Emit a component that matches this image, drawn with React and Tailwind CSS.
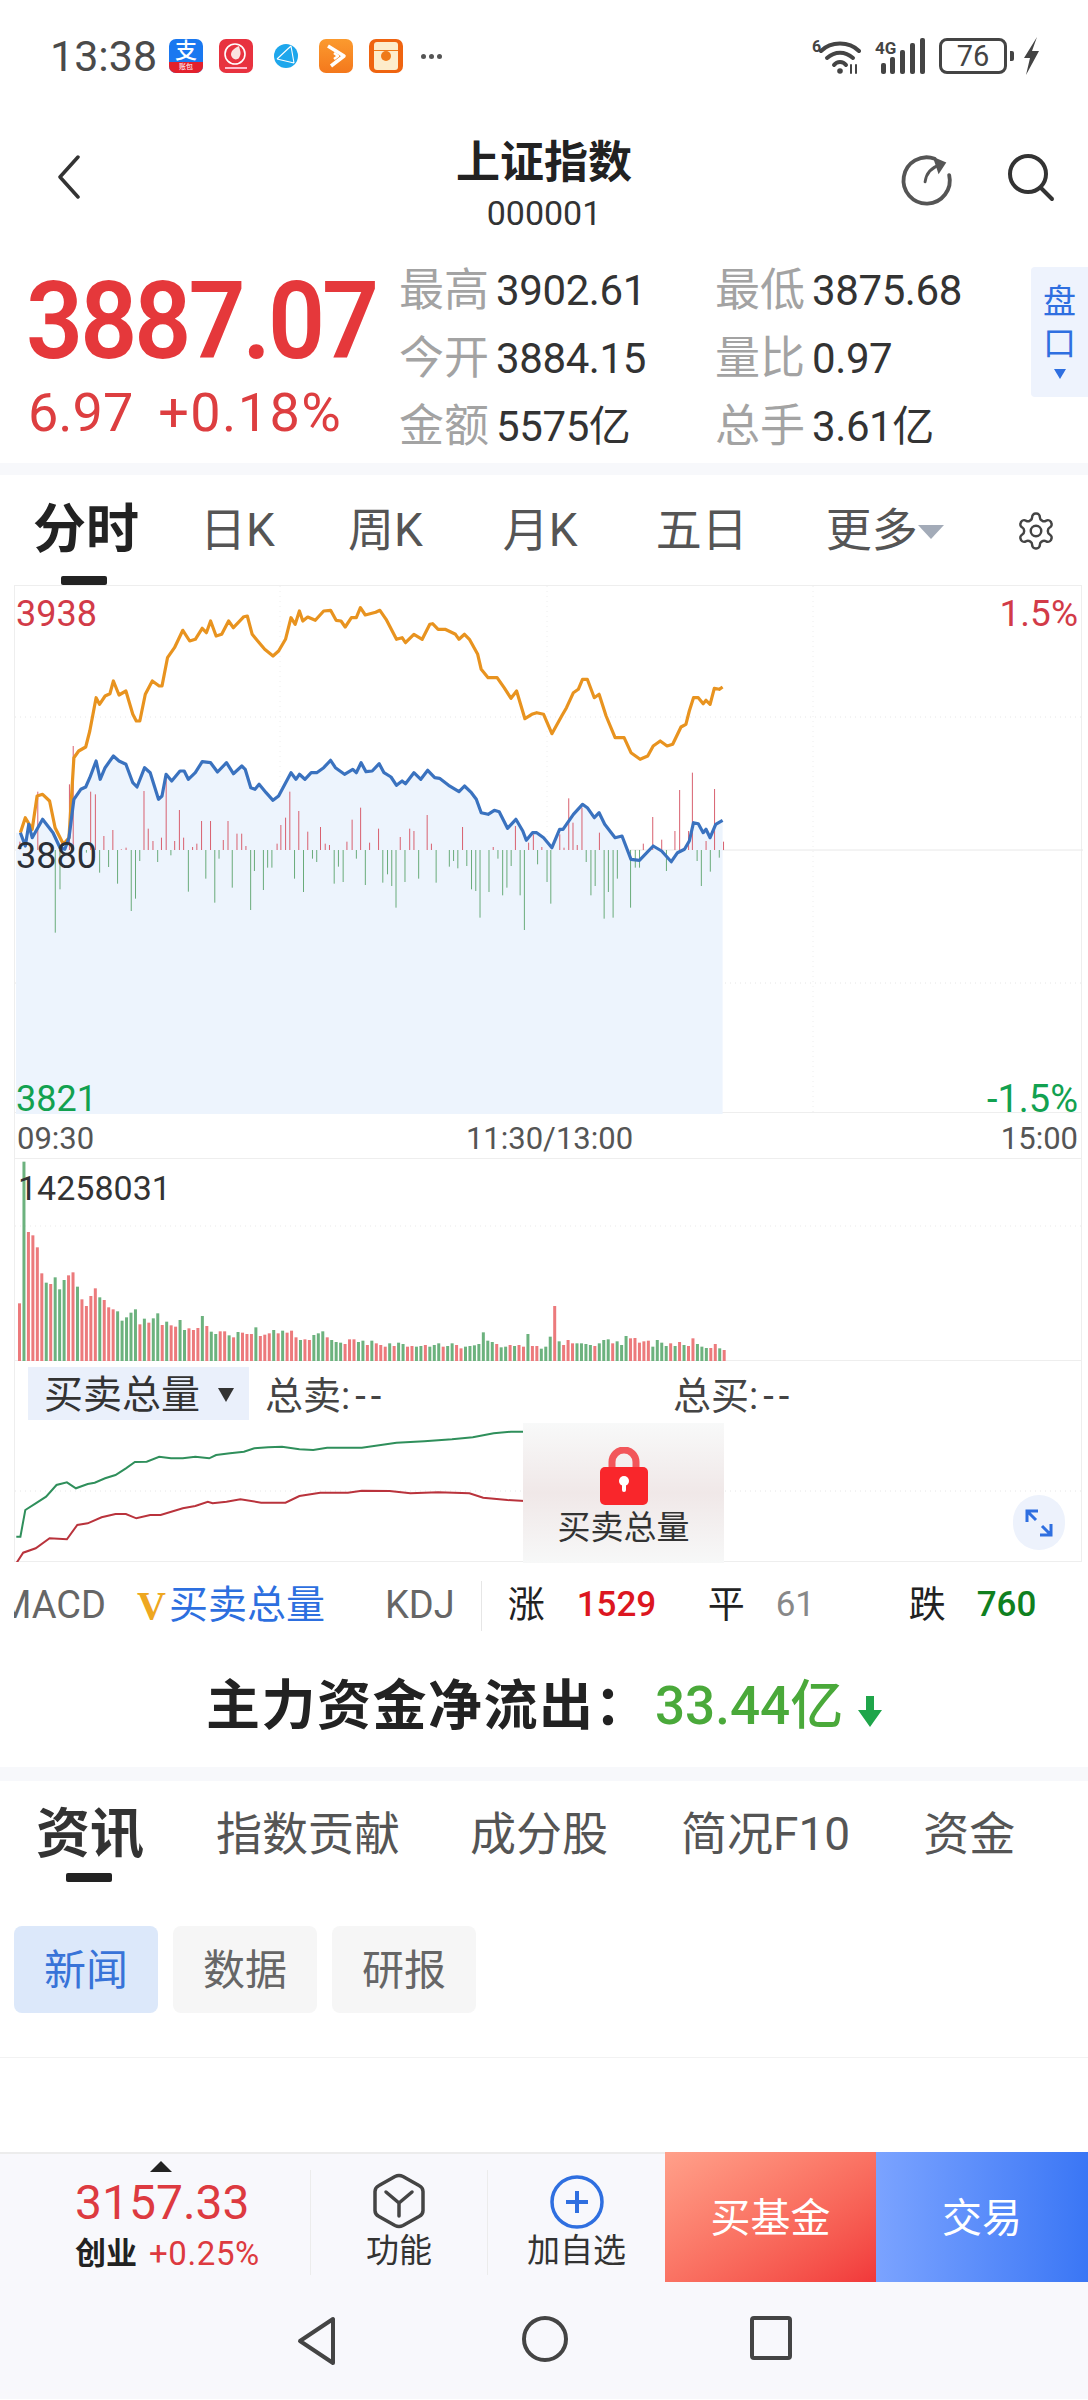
import React from "react";

const orange = "28,1085 35,1040 45,1075 52,975 60,970 70,990 78,1070 90,1120 98,1100 105,860 112,840 122,828 128,780 137,680 142,700 150,675 157,668 162,630 170,672 180,660 190,730 195,750 200,750 208,670 218,630 228,645 232,645 240,560 250,530 262,478 272,510 280,505 290,472 296,485 302,450 310,495 318,490 328,450 335,470 350,437 355,435 362,490 370,510 380,535 392,555 400,540 410,505 418,440 424,460 430,420 435,450 442,438 453,448 465,420 475,418 483,448 490,450 496,468 505,440 512,440 518,410 525,432 540,424 546,418 555,445 570,505 578,500 583,515 595,490 607,505 618,460 622,458 630,475 640,475 655,490 660,505 668,490 675,505 687,550 692,595 702,620 715,620 725,650 735,682 743,660 755,743 765,730 772,725 782,730 794,788 808,735 815,710 825,665 832,655 838,625 845,625 855,680 862,670 872,735 885,800 898,800 908,845 921,865 932,855 940,825 950,810 960,825 968,820 980,768 987,760 992,720 998,680 1005,680 1012,698 1016,688 1022,700 1028,652 1035,655 1040,648";
const blue = "28,1085 35,1125 40,1060 45,1100 60,1045 75,1085 85,1130 92,1135 98,1100 105,985 115,955 122,948 128,920 137,870 143,925 150,890 162,855 170,870 180,880 190,935 196,948 207,890 215,905 227,985 232,975 238,910 246,930 258,900 264,900 270,925 280,905 290,872 302,875 312,903 325,875 335,908 347,885 352,895 360,950 366,955 372,940 382,965 392,988 400,975 418,905 425,925 430,910 438,925 447,905 455,905 465,890 475,868 482,890 495,910 507,895 512,905 519,875 526,902 535,900 545,878 552,905 562,918 570,943 578,930 583,938 595,905 605,925 615,898 625,920 632,922 645,943 660,962 668,945 678,965 685,985 692,1025 702,1030 711,1018 718,1022 730,1072 742,1045 752,1080 757,1108 766,1085 772,1085 782,1100 794,1130 805,1075 810,1075 825,1030 838,1000 845,1010 855,1040 862,1025 870,1060 885,1100 895,1095 908,1165 920,1168 940,1125 952,1140 966,1172 975,1145 985,1135 992,1110 998,1055 1005,1058 1012,1085 1016,1075 1022,1100 1030,1060 1040,1048";
const KX = 1088 / 1568;
const mainPts = (s) => s.split(" ").map((p) => { const [x, y] = p.split(",").map(Number); return [x * KX - 14, y / 3 + 470 - 585]; });
const fmt = (a) => a.map(([x, y]) => `${x.toFixed(1)},${y.toFixed(1)}`).join(" ");
const bluePts = mainPts(blue);
const fillPts = [...bluePts, [bluePts[bluePts.length - 1][0], 528], [1, 528], [1, bluePts[0][1]]];

const redTicks = [[40,362],[78,212],[145,190],[153,75],[190,212],[200,220],[218,345],[237,327],[255,385],[265,380],[303,210],[312,323],[322,360],[340,350],[350,160],[368,360],[378,267],[387,350],[406,378],[415,368],[425,300],[444,300],[471,357],[481,300],[500,338],[510,338],[519,375],[585,368],[593,312],[603,290],[612,212],[631,270],[650,332],[677,318],[687,368],[696,372],[733,362],[744,296],[762,260],[781,365],[800,323],[846,348],[866,323],[875,330],[903,282],[912,368],[978,318],[1043,378],[1090,315],[1118,365],[1128,340],[1146,378],[1184,340],[1193,380],[1203,232],[1212,305],[1221,372],[1231,260],[1268,335],[1361,368],[1381,288],[1400,356],[1428,330],[1438,207],[1457,330],[1465,155],[1494,360],[1512,204],[1531,362]];
const greenTicks = [[115,635],[125,505],[181,395],[209,455],[228,438],[247,488],[276,570],[285,533],[294,420],[332,423],[360,403],[397,512],[434,473],[453,545],[462,413],[490,500],[529,567],[537,450],[556,507],[565,440],[574,440],[622,473],[641,513],[660,413],[669,423],[706,488],[715,437],[725,483],[753,413],[772,492],[809,485],[819,460],[828,495],[837,560],[856,483],[885,473],[922,485],[950,437],[959,420],[968,442],[987,435],[997,505],[1006,510],[1015,590],[1034,513],[1053,413],[1063,523],[1072,500],[1081,435],[1100,523],[1109,627],[1137,430],[1157,483],[1165,548],[1240,423],[1250,523],[1259,495],[1278,593],[1287,513],[1297,590],[1306,473],[1334,560],[1344,440],[1353,440],[1410,450],[1475,420],[1484,495],[1503,452],[1522,410]];
const TX = 740 / 1568;
const tickX = (x) => x * TX - 14;
const tickY = (y) => y / 3 + 720 - 585;

const vols = "520r 95g 306r 316r 352r 430r 458g 462r 442g 478g 450g 436r 427r 470g 508r 528r 498r 475r 502g 510r 532r 538r 544g 572g 562g 548g 538g 583r 566g 578r 565g 550g 585r 575g 586r 590r 570g 600g 595r 600r 594r 558g 588r 605g 612g 604r 604r 616g 622r 606g 608r 612r 612r 592g 618r 614r 610r 600g 610r 602g 608r 602r 622r 630g 628r 630r 615g 610g 604g 622r 630g 636g 638g 642r 628r 628r 636g 632g 645r 632g 640r 645r 650r 640g 648r 638g 642g 650r 648r 650g 648g 645r 650g 645g 640g 650r 648g 640g 645r 655r 650g 648g 646g 642g 607g 632g 636g 642r 652g 650g 645r 648g 645r 650r 612g 648r 648r 656g 650g 620g 528r 634g 645r 630r 640r 640g 640g 642g 645g 648r 640g 630g 628g 640r 634g 645g 618g 625r 624r 638r 634r 632r 650g 630g 638g 648g 640r 648g 636r 645g 648r 625r 642g 650g 654g 654r 642r 655g 660r".split(" ");

const buyPts = "22,1220 28,1220 35,1140 50,1120 65,1100 80,1065 95,1057 108,1075 125,1062 135,1058 150,1045 165,1035 180,1015 193,996 210,995 228,980 245,985 262,985 280,980 300,985 310,975 330,970 350,965 365,955 385,952 405,950 430,958 450,960 470,953 520,953 570,938 610,934 650,928 680,922 710,910 735,905 755,905";
const sellPts = "22,1300 32,1268 50,1255 70,1225 95,1228 110,1185 125,1180 145,1162 165,1152 180,1152 195,1165 215,1155 230,1155 262,1135 280,1128 298,1115 305,1120 325,1115 345,1108 375,1118 410,1118 430,1098 460,1088 500,1088 520,1082 560,1083 590,1090 630,1087 675,1090 695,1103 730,1110 755,1113";
const lowPts = (s) => s.split(" ").map((p) => { const [x, y] = p.split(",").map(Number); return [x * KX - 14, y / 3 + 1130 - 1361]; });

function StatusIcons() {
  return (
    <div className="flex items-center ml-[12px] h-[34px]">
      <div className="relative w-[34px] h-[34px] rounded-[7px] overflow-hidden bg-[#1a78f0] flex flex-col items-center">
        <span className="text-white text-[22px] leading-[23px] font-medium">支</span>
        <span className="absolute bottom-0 left-0 right-0 h-[11px] bg-[#e3202c] text-white text-[7px] leading-[11px] text-center">账包</span>
      </div>
      <div className="relative ml-[16px] w-[34px] h-[34px] rounded-[7px] bg-[#e8323f] flex items-start justify-center pt-[2px]">
        <svg width="28" height="30" viewBox="0 0 28 30"><circle cx="13" cy="13" r="10" fill="none" stroke="#fff" strokeWidth="1.6"/><path d="M9 14c0-5 4-7 8-9 1 5 3 7 0 12-3 3-7 1-8-3z" fill="#fbe3e0"/><rect x="3" y="26" width="22" height="2" fill="#fbc"/></svg>
      </div>
      <svg className="ml-[21px]" width="24" height="24" viewBox="0 0 24 24"><circle cx="12" cy="12" r="12" fill="#1ea7ec"/><path d="M3 15L17 2M3 15l17 4M17 2l3 17" stroke="#fff" strokeWidth="1.1" fill="none"/></svg>
      <div className="ml-[21px] w-[34px] h-[34px] rounded-[7px] bg-gradient-to-b from-[#fb9a2e] to-[#f4781c] flex items-center justify-center">
        <svg width="24" height="26" viewBox="0 0 24 26" fill="none" stroke="#fff" strokeWidth="3.5" strokeLinejoin="round"><path d="M4 3l16 10-13 10"/><path d="M10 10l4 3-4 3" strokeWidth="2.5"/></svg>
      </div>
      <div className="ml-[16px] w-[34px] h-[34px] rounded-[7px] bg-[#ef6410] flex items-center justify-center">
        <div className="relative w-[24px] h-[28px] rounded-[3px] bg-[#fdeccb] flex items-center justify-center">
          <span className="absolute top-[8px] left-0 right-0 h-px bg-[#ef7a18]"></span>
          <span className="relative block w-[10px] h-[10px] rounded-full bg-[#ef7a18]"></span>
        </div>
      </div>
      <div className="ml-[18px] flex gap-[3px]">
        <span className="block w-[5px] h-[5px] rounded-full bg-[#555]"></span>
        <span className="block w-[5px] h-[5px] rounded-full bg-[#555]"></span>
        <span className="block w-[5px] h-[5px] rounded-full bg-[#555]"></span>
      </div>
    </div>
  );
}

function StatusRight() {
  return (
    <div className="flex items-center">
      <svg width="50" height="40" viewBox="0 0 50 40" fill="none" stroke="#444" strokeLinecap="round">
        <path d="M10 15C20 5 38 5 48 15" strokeWidth="4"/>
        <path d="M16 22C24 15 34 15 42 22" strokeWidth="4"/>
        <path d="M23 29C26 25 32 25 35 29" strokeWidth="4"/>
        <circle cx="29" cy="35" r="2.8" fill="#444" stroke="none"/>
        <path d="M40 29v8M45 37v-8" strokeWidth="2"/>
        <text x="1" y="16" fontSize="16" fontWeight="700" fontFamily="Roboto" fill="#444" stroke="none">6</text>
      </svg>
      <svg className="ml-[14px]" width="52" height="38" viewBox="0 0 52 38" fill="#444">
        <rect x="6" y="26" width="5" height="11" rx="2"/><rect x="15" y="20" width="5" height="17" rx="2"/><rect x="25" y="13" width="5" height="24" rx="2"/><rect x="35" y="6" width="5" height="31" rx="2"/><rect x="45" y="1" width="5" height="36" rx="2"/>
        <text x="0" y="17" fontSize="17" fontWeight="700" fontFamily="Roboto">4G</text>
      </svg>
      <div className="ml-[12px] w-[68px] h-[36px] rounded-[8px] border-[3px] border-[#444] flex items-center justify-center text-[29px] leading-none text-[#444]">76</div>
      <span className="block w-[4px] h-[10px] ml-[3px] rounded-r-[2px] bg-[#444]"></span>
      <svg className="ml-[8px]" width="18" height="38" viewBox="0 0 18 38"><path d="M15 0L2 21h6L4 38 17 14h-7z" fill="#444"/></svg>
    </div>
  );
}

function Stat({ label, value, w }) {
  return (
    <div className={`flex items-center ${w}`}>
      <span className="text-[45px] leading-[68px] text-[#a3a3a3]">{label}</span>
      <span className="ml-[7px] text-[42px] leading-[68px] text-[#333] tracking-[-0.4px]">{value}</span>
    </div>
  );
}

function Volume() {
  return (
    <svg width="1068" height="202" viewBox="0 0 1068 202" className="block">
      <line x1="0" x2="1068" y1="67" y2="67" stroke="#e9e9e9" strokeDasharray="1 4" />
      {vols.map((v, i) => {
        const y = parseInt(v, 10);
        const top = y / 3 + 1130 - 1159;
        return <rect key={i} x={3 + i * 4.46} y={top} width="3" height={202 - top} fill={v.endsWith("r") ? "#ec7a7c" : "#6cb27e"} />;
      })}
    </svg>
  );
}

export default function App() {
  return (
    <div className="relative w-[1088px] h-[2400px] bg-white overflow-hidden font-['Roboto','Noto_Sans_CJK_SC',sans-serif]">
      <div className="h-[100px] pl-[50px] pr-[48px] pt-[36px] flex items-start justify-between">
        <div className="flex items-center h-[40px]">
          <span className="text-[43px] leading-[40px] text-[#4a4a4a]">13:38</span>
          <StatusIcons />
        </div>
        <StatusRight />
      </div>

      <div className="relative h-[150px] flex flex-col items-center pt-[40px]">
        <span className="text-[44px] leading-[46px] font-bold text-[#222]">上证指数</span>
        <span className="mt-[8px] text-[34px] leading-[38px] text-[#333]">000001</span>
        <svg className="absolute left-[56px] top-[55px]" width="26" height="44" viewBox="0 0 26 44" fill="none"><path d="M22 2L4 22l18 20" stroke="#333" strokeWidth="3.5" strokeLinecap="round" strokeLinejoin="round"/></svg>
        <svg className="absolute left-[900px] top-[52px]" width="54" height="54" viewBox="0 0 56 56" fill="none" stroke="#555" strokeWidth="4" strokeLinecap="round"><path d="M36 7A24 24 0 1 0 51 24"/><path d="M26 31c1-8 6-15 16-18" strokeWidth="3"/><path d="M34 5l14 6-8 12z" fill="#555" stroke="none"/></svg>
        <svg className="absolute left-[1006px] top-[53px]" width="50" height="50" viewBox="0 0 50 50" fill="none" stroke="#333" strokeWidth="4" strokeLinecap="round"><circle cx="22" cy="21" r="18"/><path d="M35 35l11 11"/></svg>
      </div>

      <div className="relative h-[213px] flex pl-[26px] pt-[7px]">
        <div className="w-[373px] flex flex-col">
          <span className="mt-[13px] inline-block origin-bottom scale-y-[1.08] text-[100px] leading-[112px] font-semibold text-[#e5383b] tracking-[-3px] whitespace-nowrap">3887.07</span>
          <div className="flex text-[54px] leading-[60px] text-[#dd3e40] mt-[1px] ml-[2px]">
            <span>6.97</span>
            <span className="ml-[25px] tracking-[1.4px]">+0.18%</span>
          </div>
        </div>
        <div className="flex flex-col">
          <Stat label="最高" value="3902.61" w="w-[316px]" />
          <Stat label="今开" value="3884.15" w="w-[316px]" />
          <Stat label="金额" value="5575亿" w="w-[316px]" />
        </div>
        <div className="flex flex-col">
          <Stat label="最低" value="3875.68" />
          <Stat label="量比" value="0.97" />
          <Stat label="总手" value="3.61亿" />
        </div>
        <div className="absolute right-0 top-[17px] w-[57px] h-[130px] rounded-l-[4px] bg-[#eef3fd] flex flex-col items-center text-[#2f6fe0]">
          <span className="text-[33px] leading-[42px] mt-[14px]">盘</span>
          <span className="text-[33px] leading-[42px]">口</span>
          <span className="mt-[4px] w-0 h-0 border-l-[6px] border-r-[6px] border-t-[10px] border-l-transparent border-r-transparent border-t-[#2f6fe0]"></span>
        </div>
      </div>

      <div className="h-[12px] bg-[#f7f8fb]"></div>

      <div className="relative h-[101px] flex items-center pl-[33px] text-[46px] text-[#555] pt-[10px]">
        <span className="text-[53px] font-bold text-[#222]">分时</span>
        <span className="ml-[61px]">日K</span>
        <span className="ml-[73px]">周K</span>
        <span className="ml-[80px]">月K</span>
        <span className="ml-[78px]">五日</span>
        <span className="ml-[78px]">更多</span>
        <span className="mt-[2px] w-0 h-0 border-l-[13px] border-r-[13px] border-t-[14px] border-l-transparent border-r-transparent border-t-[#a3abb8]"></span>
        <svg className="ml-[71px]" width="42" height="42" viewBox="0 0 24 24" fill="none" stroke="#444" strokeWidth="1.4" strokeLinejoin="round"><path d="M12.2 2h-.4a2 2 0 0 0-2 2v.2a2 2 0 0 1-1 1.7l-.4.3a2 2 0 0 1-2 0l-.2-.1a2 2 0 0 0-2.7.7l-.2.4a2 2 0 0 0 .7 2.7l.2.1a2 2 0 0 1 1 1.7v.6a2 2 0 0 1-1 1.7l-.2.1a2 2 0 0 0-.7 2.7l.2.4a2 2 0 0 0 2.7.7l.2-.1a2 2 0 0 1 2 0l.4.3a2 2 0 0 1 1 1.7v.2a2 2 0 0 0 2 2h.4a2 2 0 0 0 2-2v-.2a2 2 0 0 1 1-1.7l.4-.3a2 2 0 0 1 2 0l.2.1a2 2 0 0 0 2.7-.7l.2-.4a2 2 0 0 0-.7-2.7l-.2-.1a2 2 0 0 1-1-1.7v-.6a2 2 0 0 1 1-1.7l.2-.1a2 2 0 0 0 .7-2.7l-.2-.4a2 2 0 0 0-2.7-.7l-.2.1a2 2 0 0 1-2 0l-.4-.3a2 2 0 0 1-1-1.7V4a2 2 0 0 0-2-2z"/><circle cx="12" cy="12" r="3"/></svg>
      </div>
      <div className="ml-[61px] w-[46px] h-[9px] rounded-[2px] bg-[#222]"></div>

      <div className="mx-[14px] w-[1068px] border-x border-[#eeeeee]">
        <div className="relative h-[528px] border-t border-b border-[#eeeeee]">
          <svg width="1068" height="528" viewBox="0 0 1068 528" className="block">
            <line x1="0" x2="1068" y1="131" y2="131" stroke="#e6e6e6" strokeDasharray="1 4"/>
            <line x1="0" x2="1068" y1="264" y2="264" stroke="#e8e8e8"/>
            <line x1="0" x2="1068" y1="397" y2="397" stroke="#e6e6e6" strokeDasharray="1 4"/>
            <line x1="265" x2="265" y1="0" y2="528" stroke="#eeeeee" strokeDasharray="1 4"/>
            <line x1="532" x2="532" y1="0" y2="528" stroke="#eeeeee" strokeDasharray="1 4"/>
            <line x1="798" x2="798" y1="0" y2="528" stroke="#eeeeee" strokeDasharray="1 4"/>
            <polygon points={fmt(fillPts)} fill="#edf4fd"/>
            {redTicks.map(([x, y], i) => <line key={i} x1={tickX(x)} x2={tickX(x)} y1={tickY(y)} y2="264" stroke="#d8606f" strokeWidth="1"/>)}
            {greenTicks.map(([x, y], i) => <line key={i} x1={tickX(x)} x2={tickX(x)} y1="264" y2={tickY(y)} stroke="#69ab7a" strokeWidth="1"/>)}
            <polyline points={fmt(mainPts(orange))} fill="none" stroke="#e8931f" strokeWidth="3.2" strokeLinejoin="round"/>
            <polyline points={fmt(bluePts)} fill="none" stroke="#3a72bf" strokeWidth="3.2" strokeLinejoin="round"/>
          </svg>
          <span className="absolute left-[1px] top-[8px] text-[36px] leading-[40px] text-[#d23b48]">3938</span>
          <span className="absolute right-[3px] top-[8px] text-[37px] leading-[40px] text-[#d23b48]">1.5%</span>
          <span className="absolute left-[1px] top-[250px] text-[36px] leading-[40px] text-[#2b2f36]">3880</span>
          <span className="absolute left-[1px] bottom-[-7px] text-[36px] leading-[40px] text-[#12a150]">3821</span>
          <span className="absolute right-[3px] bottom-[-7px] text-[38px] leading-[40px] text-[#12a150]">-1.5%</span>
        </div>

        <div className="h-[45px] flex items-center justify-between px-[2px] pt-[7px] text-[31px] text-[#555]">
          <span>09:30</span>
          <span className="ml-[4px]">11:30/13:00</span>
          <span className="mr-[1px]">15:00</span>
        </div>

        <div className="relative h-[203px] border-t border-b border-[#eeeeee]">
          <Volume />
          <span className="absolute left-[3px] top-[9px] text-[34px] leading-[40px] text-[#333]">14258031</span>
        </div>

        <div className="relative h-[201px] border-b border-[#eeeeee]">
          <svg width="1068" height="201" viewBox="0 0 1068 201" className="absolute left-0 top-0">
            <line x1="0" x2="1068" y1="130" y2="130" stroke="#e6e6e6" strokeDasharray="1 4"/>
            <polyline points={fmt(lowPts(buyPts))} fill="none" stroke="#2f8f5b" strokeWidth="2"/>
            <polyline points={fmt(lowPts(sellPts))} fill="none" stroke="#b9333c" strokeWidth="2"/>
          </svg>
          <div className="relative flex items-start pt-[6px] pl-[13px] text-[38px] leading-[53px] text-[#444]">
            <div className="w-[221px] h-[53px] bg-[#eaf0fb] flex items-center pl-[16px] text-[39px] text-[#333] pt-[3px]">
              <span>买卖总量</span>
              <span className="ml-[18px] w-0 h-0 border-l-[8px] border-r-[8px] border-t-[14px] border-l-transparent border-r-transparent border-t-[#333]"></span>
            </div>
            <div className="pt-[3px] flex ml-[16px] w-[408px]">总卖<span className="tracking-[5px]">:--</span></div>
            <div className="pt-[3px] flex">总买<span className="tracking-[5px]">:--</span></div>
          </div>
          <div className="absolute left-[508px] top-[62px] w-[201px] h-[140px] bg-gradient-to-b from-[#f8f9f9] via-[#f0e8e8] to-[#f7f8f8] flex flex-col items-center">
            <svg className="mt-[24px]" width="48" height="58" viewBox="0 0 48 58"><path d="M12 28V15a12 12 0 0 1 24 0v13" fill="none" stroke="#f2565a" strokeWidth="7"/><rect x="0" y="20" width="48" height="38" rx="5" fill="#f9262b"/><circle cx="24" cy="34" r="5" fill="#fff"/><rect x="22" y="35" width="4" height="10" rx="2" fill="#fff"/></svg>
            <span className="mt-[3px] text-[33px] leading-[40px] text-[#333]">买卖总量</span>
          </div>
          <div className="absolute left-[998px] top-[134px] w-[52px] h-[55px] rounded-full bg-[#edf2fc] flex items-center justify-center">
            <svg width="30" height="30" viewBox="0 0 30 30" fill="none" stroke="#2f6fe0" strokeWidth="3"><path d="M3 14V3h11M3 3l9 9M27 16v11H16M27 27l-9-9"/></svg>
          </div>
        </div>
      </div>

      <div className="relative h-[78px] flex items-center overflow-hidden pt-[9px]">
        <div className="ml-[14px] w-[92px] overflow-hidden flex justify-end text-[#666] text-[38px] whitespace-nowrap">MACD</div>
        <span className="ml-[31px] font-['Liberation_Serif',serif] font-bold text-[40px] text-[#eea720]">V</span>
        <span className="ml-[3px] text-[#2d6fdf] text-[39px]">买卖总量</span>
        <span className="ml-[60px] text-[#666] text-[38px]">KDJ</span>
        <span className="ml-[26px] w-px h-[50px] bg-[#e6e6e6]"></span>
        <span className="ml-[26px] text-[#222] text-[37px]">涨</span>
        <span className="ml-[32px] w-[131px] text-[#dc1620] text-[35px] font-medium">1529</span>
        <span className="text-[#222] text-[37px]">平</span>
        <span className="ml-[31px] w-[133px] text-[#888] text-[35px]">61</span>
        <span className="text-[#222] text-[37px]">跌</span>
        <span className="ml-[31px] text-[#10801f] text-[35px] font-medium">760</span>
      </div>

      <div className="h-[127px] flex items-center pl-[206px] pt-[6px]">
        <span className="text-[54px] font-bold text-[#222] tracking-[1.5px] whitespace-nowrap">主力资金净流出：</span>
        <span className="ml-[5px] text-[53px] font-medium text-[#4aa93a] whitespace-nowrap">33.44亿</span>
        <svg className="ml-[13px] mt-[8px]" width="28" height="34" viewBox="0 0 28 34"><path d="M10 2h8v14h8L14 33 2 16h8z" fill="#1fa54a"/></svg>
      </div>

      <div className="h-[14px] bg-[#f7f8fb]"></div>

      <div className="h-[92px] flex items-center pl-[36px] text-[46px] text-[#555] pt-[14px]">
        <span className="text-[54px] font-bold text-[#333]">资讯</span>
        <span className="ml-[72px]">指数贡献</span>
        <span className="ml-[70px]">成分股</span>
        <span className="ml-[73px]">简况F10</span>
        <span className="ml-[73px]">资金</span>
      </div>
      <div className="ml-[66px] w-[46px] h-[9px] rounded-[2px] bg-[#222]"></div>

      <div className="mt-[44px] pl-[14px] flex gap-[15px] text-[42px] text-[#666]">
        <div className="w-[144px] h-[87px] rounded-[8px] bg-[#dce8fa] flex items-center justify-center text-[#3873d8] pt-[2px]">新闻</div>
        <div className="w-[144px] h-[87px] rounded-[8px] bg-[#f6f6f6] flex items-center justify-center pt-[2px]">数据</div>
        <div className="w-[144px] h-[87px] rounded-[8px] bg-[#f6f6f6] flex items-center justify-center pt-[2px]">研报</div>
      </div>

      <div className="mt-[44px] h-px bg-[#f2f2f2]"></div>
      <div className="h-[94px]"></div>

      <div className="h-[130px] flex bg-[#f8f8fc] border-t-[2px] border-[#ececec]">
        <div className="relative w-[310px] flex flex-col pl-[75px]">
          <span className="absolute left-[150px] top-[7px] w-0 h-0 border-l-[11px] border-r-[11px] border-b-[11px] border-l-transparent border-r-transparent border-b-[#222]"></span>
          <span className="mt-[21px] text-[48px] leading-[56px] text-[#dd3a40]">3157.33</span>
          <div className="mt-[4px] flex items-center">
            <span className="text-[31px] leading-[38px] font-bold text-[#222]">创业</span>
            <span className="ml-[12px] text-[33px] leading-[38px] text-[#dd3a40] tracking-[0.6px]">+0.25%</span>
          </div>
        </div>
        <div className="w-px h-[105px] mt-[16px] bg-[#ececec]"></div>
        <div className="w-[176px] flex flex-col items-center pt-[19px]">
          <svg width="52" height="56" viewBox="0 0 52 56" fill="none" stroke="#444" strokeWidth="3.5" strokeLinejoin="round" strokeLinecap="round"><path d="M22 3.5q4-2 8 0l16 9q4 2 4 6v19q0 4-4 6l-16 9q-4 2-8 0l-16-9q-4-2-4-6v-19q0-4 4-6z"/><path d="M13 19l13 11 13-11M26 30v13"/></svg>
          <span className="mt-[1px] text-[33px] leading-[42px] text-[#333]">功能</span>
        </div>
        <div className="w-px h-[105px] mt-[16px] bg-[#ececec]"></div>
        <div className="w-[177px] flex flex-col items-center pt-[21px]">
          <svg width="54" height="54" viewBox="0 0 54 54" fill="none" stroke="#2f6fe0" strokeWidth="3.5"><circle cx="27" cy="27" r="25"/><path d="M16 27h22M27 16v22" strokeWidth="4"/></svg>
          <span className="mt-[1px] text-[33px] leading-[42px] text-[#333]">加自选</span>
        </div>
        <div className="w-[211px] -mt-[2px] h-[130px] bg-gradient-to-br from-[#ffa08a] to-[#f1373a] flex items-center justify-center text-[40px] text-white pt-[3px]">买基金</div>
        <div className="w-[212px] -mt-[2px] h-[130px] bg-gradient-to-r from-[#7ba3ff] to-[#3a76f5] flex items-center justify-center text-[40px] text-white pt-[3px]">交易</div>
      </div>

      <div className="h-[117px] bg-[#f8f8fc] flex items-start pt-[34px]">
        <svg className="ml-[296px]" width="42" height="50" viewBox="0 0 42 50" fill="none" stroke="#444" strokeWidth="4" strokeLinejoin="round"><path d="M37 3v44L4 25z"/></svg>
        <svg className="ml-[184px]" width="46" height="46" viewBox="0 0 46 46" fill="none" stroke="#444" strokeWidth="4"><circle cx="23" cy="23" r="21"/></svg>
        <svg className="ml-[182px]" width="42" height="44" viewBox="0 0 42 44" fill="none" stroke="#444" strokeWidth="4" strokeLinejoin="round"><rect x="2" y="2" width="38" height="40" rx="2"/></svg>
      </div>
    </div>
  );
}
